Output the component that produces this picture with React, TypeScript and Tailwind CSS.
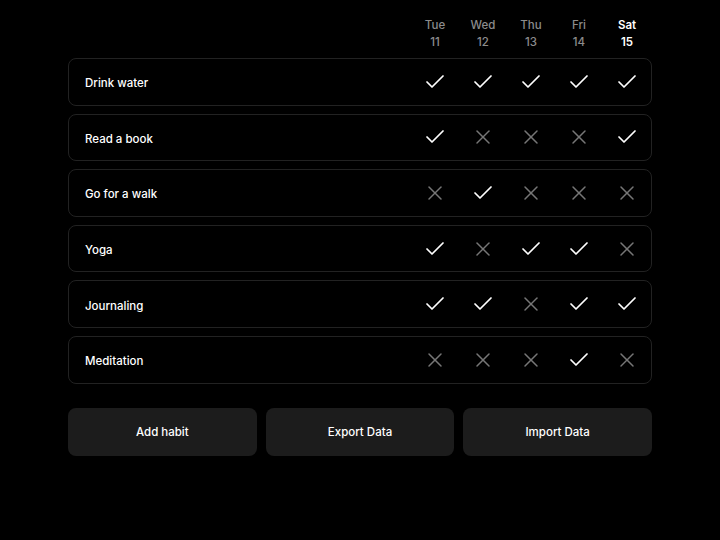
import { Check, X } from "lucide-react";

const DAYS = [
  { label: "Tue", date: 11 },
  { label: "Wed", date: 12 },
  { label: "Thu", date: 13 },
  { label: "Fri", date: 14 },
  { label: "Sat", date: 15, today: true },
];

const HABITS = [
  { name: "Drink water", done: [1, 1, 1, 1, 1] },
  { name: "Read a book", done: [1, 0, 0, 0, 1] },
  { name: "Go for a walk", done: [0, 1, 0, 0, 0] },
  { name: "Yoga", done: [1, 0, 1, 1, 0] },
  { name: "Journaling", done: [1, 1, 0, 1, 1] },
  { name: "Meditation", done: [0, 0, 0, 1, 0] },
];

const ACTIONS = ["Add habit", "Export Data", "Import Data"];

export default function App() {
  return (
    <div className="min-h-[540px] w-full bg-black text-white font-['Inter','Liberation_Sans',sans-serif]">
      <div className="w-[584px] mx-auto pt-[17px]">
        {/* Day header */}
        <div className="flex justify-end pr-px mb-[7px]">
          {DAYS.map((day) => (
            <div
              key={day.label}
              className={`w-12 flex flex-col items-center text-[11.5px] leading-[17px] ${
                day.today ? "text-white font-semibold" : "text-[#8c8c8c] font-medium"
              }`}
            >
              <span>{day.label}</span>
              <span>{day.date}</span>
            </div>
          ))}
        </div>

        {/* Habit rows */}
        <div className="flex flex-col gap-2">
          {HABITS.map((habit) => (
            <div
              key={habit.name}
              className="h-[47.6px] flex items-center border border-[#222222] rounded-lg pl-4"
            >
              <span className="flex-1 text-[11.5px] leading-4 font-medium pt-[3px]">{habit.name}</span>
              <div className="flex">
                {habit.done.map((d, i) => (
                  <div key={i} className="w-12 flex items-center justify-center">
                    {d ? (
                      <Check size={24} strokeWidth={1.75} className="text-white" />
                    ) : (
                      <X size={24} strokeWidth={1.5} className="text-[#767676]" />
                    )}
                  </div>
                ))}
              </div>
            </div>
          ))}
        </div>

        {/* Actions */}
        <div className="grid grid-cols-3 gap-[9px] mt-6">
          {ACTIONS.map((label) => (
            <button
              key={label}
              className="h-12 rounded-lg bg-[#1c1c1c] text-[11.5px] font-medium text-white pt-[3px]"
            >
              {label}
            </button>
          ))}
        </div>
      </div>
    </div>
  );
}
